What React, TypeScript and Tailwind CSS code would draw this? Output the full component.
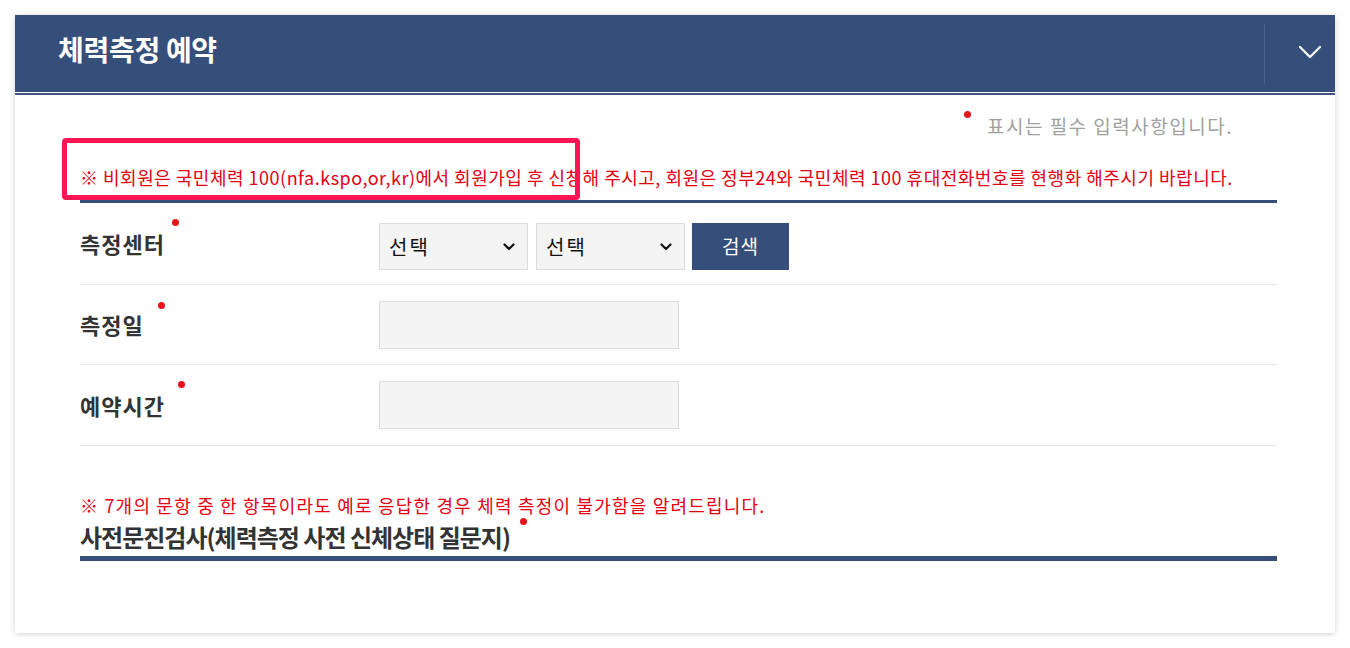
import { ReactNode } from "react";

const font = { fontFamily: '"Noto Sans CJK KR", "Noto Sans", sans-serif' };

function Required({ children, dotClass }: { children: ReactNode; dotClass: string }) {
  return (
    <span className="relative inline-block">
      {children}
      <span className={`absolute h-[7px] w-[7px] rounded-full bg-[#e8141b] ${dotClass}`} />
    </span>
  );
}

function SelectBox() {
  return (
    <div className="flex h-[47px] w-[149px] items-center justify-between border border-[#dcdcdc] bg-[#f4f4f4] pl-[9px] pr-[12px] text-[20px] tracking-[2px] text-[#111]">
      <span>선택</span>
      <svg width="12" height="8" viewBox="0 0 12 8" fill="none">
        <path d="M1.5 1.5 6 6l4.5-4.5" stroke="#111" strokeWidth="2.2" strokeLinecap="round" strokeLinejoin="round" />
      </svg>
    </div>
  );
}

function FormRow({
  label,
  dotClass,
  labelClass = "",
  children,
  className,
}: {
  label: string;
  dotClass: string;
  labelClass?: string;
  children: ReactNode;
  className: string;
}) {
  return (
    <div className={`flex items-center border-b border-[#e6e6e6] ${className}`}>
      <div className={`w-[299px] text-[22px] font-bold leading-[33px] tracking-[1px] text-[#333] ${labelClass}`}>
        <Required dotClass={dotClass}>{label}</Required>
      </div>
      {children}
    </div>
  );
}

export default function App() {
  return (
    <div className="min-h-screen bg-white p-[15px]" style={font}>
      <section className="relative h-[618px] w-[1320px] bg-white shadow-[0_1px_6px_rgba(0,0,0,0.18)]">
        <header className="flex h-[77px] items-center justify-between bg-[#354e7a] pl-[43px]">
          <h2 className="pb-[10px] text-[28px] font-bold leading-[40px] tracking-[-0.3px] text-white">체력측정 예약</h2>
          <div className="flex h-[60px] w-[71px] items-center justify-end border-l border-[#4c6290] pb-[4px] pr-[13px]">
            <svg width="24" height="14" viewBox="0 0 24 14" fill="none">
              <path d="M2 2l10 10L22 2" stroke="white" strokeWidth="2.2" strokeLinecap="round" strokeLinejoin="round" />
            </svg>
          </div>
        </header>
        <div className="h-[1px] bg-white" />
        <div className="h-[2px] bg-[#3f5680]" />

        <div className="pl-[65px] pr-[58px]">
          <div className="flex justify-end pr-[44px] pt-[17px]">
            <span className="relative text-[19px] leading-[28px] tracking-[1.5px] text-[#a0a0a0]">
              <span className="absolute -left-[23px] top-[-1px] h-[7px] w-[7px] rounded-full bg-[#e8141b]" />
              표시는 필수 입력사항입니다.
            </span>
          </div>

          <p className="mt-[24px] border-b-[3px] border-[#344d79] pb-[9px] text-[18px] leading-[27px] tracking-[0.5px] text-[#e50012]">
            ※ 비회원은 국민체력 100(nfa.kspo,or,kr)에서 회원가입 후 신청해 주시고, 회원은 정부24와 국민체력 100 휴대전화번호를 현행화 해주시기 바랍니다.
          </p>

          <FormRow label="측정센터" dotClass="-right-[14px] -top-[8px]" labelClass="mb-[6px]" className="h-[82px] pt-[6px]">
            <div className="flex items-center">
              <SelectBox />
              <div className="ml-[8px]">
                <SelectBox />
              </div>
              <button className="ml-[7px] h-[47px] w-[97px] bg-[#354e7a] text-[19px] tracking-[1px] text-white">검색</button>
            </div>
          </FormRow>
          <FormRow label="측정일" dotClass="-right-[21px] top-[-6px]" className="h-[80px]">
            <div className="h-[48px] w-[300px] border border-[#dcdcdc] bg-[#f4f4f4]" />
          </FormRow>
          <FormRow label="예약시간" dotClass="-right-[20px] top-[-8px]" className="h-[81px]">
            <div className="h-[48px] w-[300px] border border-[#dcdcdc] bg-[#f4f4f4]" />
          </FormRow>

          <p className="mt-[46px] text-[18px] leading-[27px] tracking-[1.2px] text-[#e50012]">
            ※ 7개의 문항 중 한 항목이라도 예로 응답한 경우 체력 측정이 불가함을 알려드립니다.
          </p>
          <div className="mt-[2px] border-b-[5px] border-[#344d79] pb-[3px]">
            <h3 className="text-[24px] font-bold leading-[32px] tracking-[-1px] text-[#333]">
              <Required dotClass="-right-[17px] top-[-3px]">사전문진검사(체력측정 사전 신체상태 질문지)</Required>
            </h3>
          </div>
        </div>

        <div className="pointer-events-none absolute left-[47px] top-[123px] h-[62px] w-[518px] rounded-[4px] border-[5px] border-[#ff1454]" />
      </section>
    </div>
  );
}
